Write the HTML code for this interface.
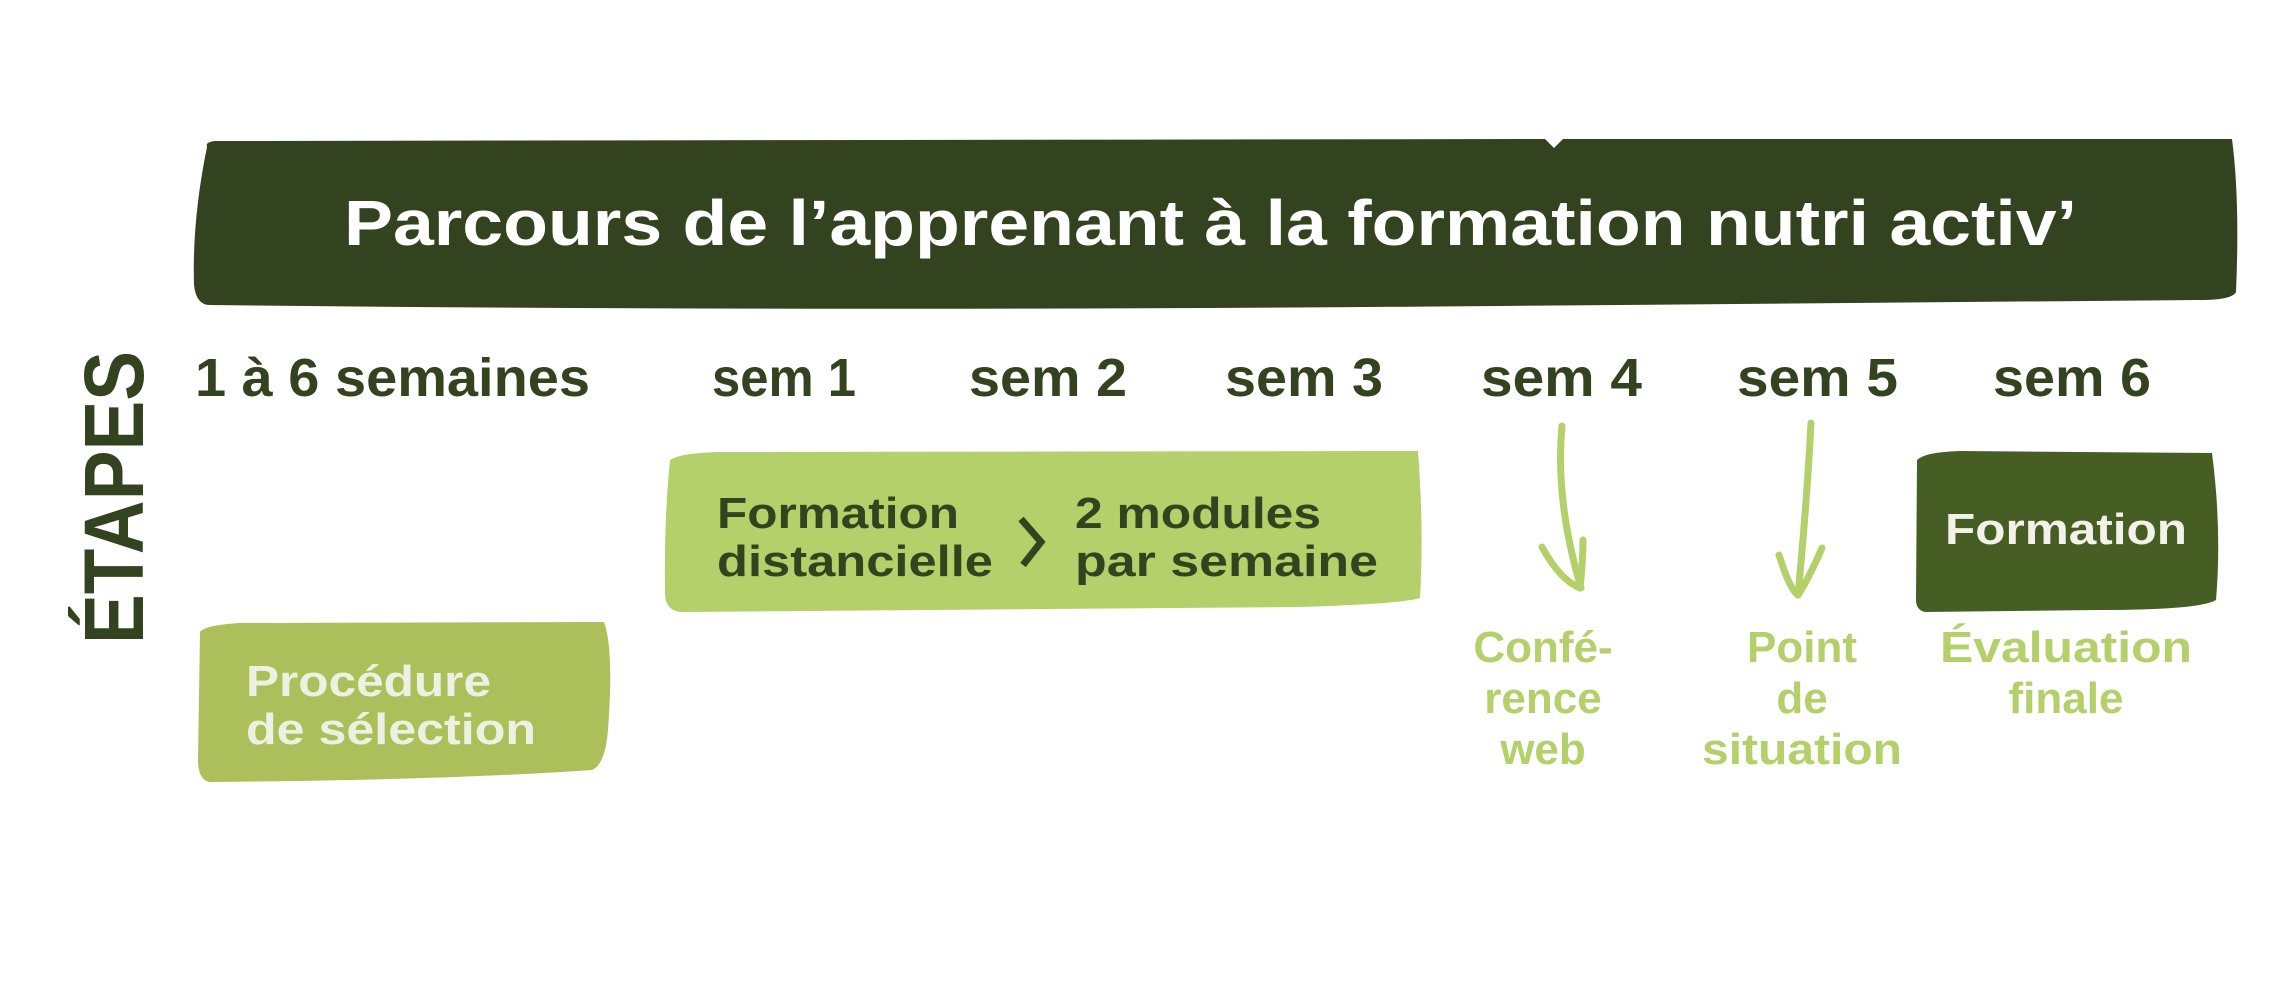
<!DOCTYPE html>
<html><head><meta charset="utf-8"><style>
html,body{margin:0;padding:0;background:#fff;width:2294px;height:991px;overflow:hidden}
svg{display:block}
text{font-family:"Liberation Sans",sans-serif;font-weight:bold}
</style></head><body>
<svg width="2294" height="991" viewBox="0 0 2294 991" xmlns="http://www.w3.org/2000/svg">
<path d="M207 147 Q205 142 215 141 L1545 139 L1554 148 L1563 139 L2232 139 Q2240 200 2236 292 Q2232 300 2200 300 L1500 306 Q800 312 210 305 Q196 305 194 285 Q192 220 207 147 Z" fill="#34431f"/>
<text x="344" y="245" font-size="64" fill="#fff" textLength="1733" lengthAdjust="spacingAndGlyphs" font-weight="normal" style="font-weight:600">Parcours de l’apprenant à la formation nutri activ’</text>
<g fill="#34431f" font-size="54">
<text x="195" y="396" textLength="395" lengthAdjust="spacingAndGlyphs">1 à 6 semaines</text>
<text x="712" y="396" textLength="144" lengthAdjust="spacingAndGlyphs">sem 1</text>
<text x="969" y="396" textLength="158" lengthAdjust="spacingAndGlyphs">sem 2</text>
<text x="1225" y="396" textLength="158" lengthAdjust="spacingAndGlyphs">sem 3</text>
<text x="1481" y="396" textLength="161" lengthAdjust="spacingAndGlyphs">sem 4</text>
<text x="1737" y="396" textLength="161" lengthAdjust="spacingAndGlyphs">sem 5</text>
<text x="1993" y="396" textLength="158" lengthAdjust="spacingAndGlyphs">sem 6</text>
</g>
<text transform="translate(143,644) rotate(-90)" font-size="84" fill="#34431f" textLength="293" lengthAdjust="spacingAndGlyphs">ÉTAPES</text>
<path d="M670 460 Q680 453 720 452 L1418 451 Q1424 530 1420 598 Q1400 604 1300 607 L680 612 Q664 610 665 590 Q664 520 670 460 Z" fill="#b3d06a"/>
<g fill="#34431f" font-size="44">
<text x="717" y="528" textLength="242" lengthAdjust="spacingAndGlyphs">Formation</text>
<text x="717" y="576" textLength="276" lengthAdjust="spacingAndGlyphs">distancielle</text>
<text x="1075" y="528" textLength="246" lengthAdjust="spacingAndGlyphs">2 modules</text>
<text x="1075" y="576" textLength="303" lengthAdjust="spacingAndGlyphs">par semaine</text>
</g>
<path d="M1021 519 L1041 542 L1023 565" fill="none" stroke="#34431f" stroke-width="7"/>
<path d="M200 632 Q205 625 240 623 L604 622 Q614 650 608 730 Q605 765 592 770 Q450 780 210 782 Q198 780 198 760 Z" fill="#adbf5a"/>
<g fill="#eef0e2" font-size="44">
<text x="246" y="696" textLength="245" lengthAdjust="spacingAndGlyphs">Procédure</text>
<text x="246" y="744" textLength="290" lengthAdjust="spacingAndGlyphs">de sélection</text>
</g>
<path d="M1917 460 Q1925 452 1960 451 L2212 453 Q2222 530 2216 600 Q2200 610 2100 610 L1925 612 Q1916 610 1916 600 Z" fill="#465e24"/>
<text x="2066" y="544" font-size="44" fill="#f2f2ea" text-anchor="middle" textLength="242" lengthAdjust="spacingAndGlyphs">Formation</text>
<g fill="none" stroke="#b3d06a" stroke-width="7" stroke-linecap="round" stroke-linejoin="round">
<path d="M1562 426 Q1555 500 1581 588"/>
<path d="M1542 547 Q1560 580 1580 588 Q1583 560 1583 540"/>
<path d="M1811 423 Q1807 500 1798 595"/>
<path d="M1779 555 Q1790 590 1798 595 Q1808 580 1822 548"/>
</g>
<g fill="#b3d06a" font-size="44" text-anchor="middle">
<text x="1543" y="662">Confé-</text>
<text x="1543" y="713">rence</text>
<text x="1543" y="764">web</text>
<text x="1802" y="662">Point</text>
<text x="1802" y="713">de</text>
<text x="1802" y="764" textLength="200" lengthAdjust="spacingAndGlyphs">situation</text>
<text x="2066" y="662" textLength="252" lengthAdjust="spacingAndGlyphs">Évaluation</text>
<text x="2066" y="713">finale</text>
</g>
</svg>
</body></html>
